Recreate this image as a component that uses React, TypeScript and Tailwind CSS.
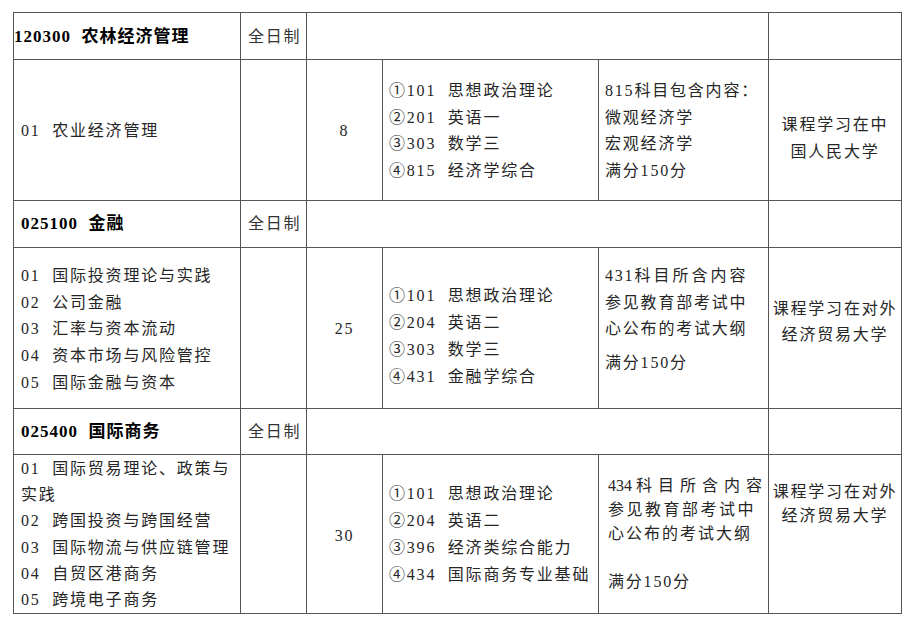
const cell = 'border border-[#555] align-top p-0'

type HeaderProps = { code: string; name: string; rowH: string; pt: string; pl: string }

function HeaderRow({ code, name, rowH, pt, pl }: HeaderProps) {
  return (
    <tr className={rowH}>
      <td className={cell}>
        <div className={`${pt} ${pl} whitespace-pre text-[17px] font-bold tracking-[1px] text-black`}>
          {code}  {name}
        </div>
      </td>
      <td className={cell}>
        <div className={`${pt} pl-[7px] text-[#333]`}>全日制</div>
      </td>
      <td colSpan={3} className={cell} />
      <td className={cell} />
    </tr>
  )
}

function Lines({ items, className }: { items: string[]; className: string }) {
  return (
    <div className={`whitespace-pre ${className}`}>
      {items.map((t) => (
        <div key={t}>{t}</div>
      ))}
    </div>
  )
}

export default function App() {
  return (
    <div className="min-h-[622px] w-[908px] bg-white pl-[13px] pt-[12px] [font-family:'Liberation_Serif','Noto_Sans_CJK_SC',serif] text-[16px] leading-[26.5px] tracking-[1.8px] text-[#262626]">
      <table className="w-[888px] table-fixed border-collapse">
        <colgroup>
          <col className="w-[227px]" />
          <col className="w-[66px]" />
          <col className="w-[76px]" />
          <col className="w-[216px]" />
          <col className="w-[170px]" />
          <col className="w-[133px]" />
        </colgroup>
        <tbody>
          {/* 120300 农林经济管理 */}
          <HeaderRow code="120300" name="农林经济管理" rowH="h-[47px]" pt="pt-[11px]" pl="pl-0" />
          <tr className="h-[141px]">
            <td className={cell}>
              <Lines className="pt-[58px] pl-[7px]" items={['01  农业经济管理']} />
            </td>
            <td className={cell} />
            <td className={cell}>
              <div className="pt-[58px] text-center">8</div>
            </td>
            <td className={cell}>
              <Lines
                className="pt-[18px] pl-[6px]"
                items={['①101  思想政治理论', '②201  英语一', '③303  数学三', '④815  经济学综合']}
              />
            </td>
            <td className={cell}>
              <Lines
                className="pt-[18px] pl-[6px]"
                items={['815科目包含内容：', '微观经济学', '宏观经济学', '满分150分']}
              />
            </td>
            <td className={cell}>
              <div className="pt-[51px] text-center leading-[27px] whitespace-nowrap">
                <div>课程学习在中</div>
                <div>国人民大学</div>
              </div>
            </td>
          </tr>

          {/* 025100 金融 */}
          <HeaderRow code="025100" name="金融" rowH="h-[47px]" pt="pt-[10px]" pl="pl-[7px]" />
          <tr className="h-[161px]">
            <td className={cell}>
              <Lines
                className="pt-[15px] pl-[7px] leading-[26.7px]"
                items={[
                  '01  国际投资理论与实践',
                  '02  公司金融',
                  '03  汇率与资本流动',
                  '04  资本市场与风险管控',
                  '05  国际金融与资本',
                ]}
              />
            </td>
            <td className={cell} />
            <td className={cell}>
              <div className="pt-[68px] text-center">25</div>
            </td>
            <td className={cell}>
              <Lines
                className="pt-[34px] pl-[6px] leading-[27px]"
                items={['①101  思想政治理论', '②204  英语二', '③303  数学三', '④431  金融学综合']}
              />
            </td>
            <td className={cell}>
              <div className="pt-[15px] pl-[6px] whitespace-nowrap">
                <div>
                  431<span className="tracking-[3px]">科目所含内容</span>
                </div>
                <div>参见教育部考试中</div>
                <div>心公布的考试大纲</div>
                <div className="mt-[7px]">满分150分</div>
              </div>
            </td>
            <td className={cell}>
              <div className="pt-[48px] text-center leading-[26px] whitespace-nowrap">
                <div>课程学习在对外</div>
                <div>经济贸易大学</div>
              </div>
            </td>
          </tr>

          {/* 025400 国际商务 */}
          <HeaderRow code="025400" name="国际商务" rowH="h-[46px]" pt="pt-[10px]" pl="pl-[7px]" />
          <tr className="h-[159px]">
            <td className={cell}>
              <Lines
                className="pt-[1px] pl-[7px] leading-[26.2px]"
                items={[
                  '01  国际贸易理论、政策与',
                  '实践',
                  '02  跨国投资与跨国经营',
                  '03  国际物流与供应链管理',
                  '04  自贸区港商务',
                  '05  跨境电子商务',
                ]}
              />
            </td>
            <td className={cell} />
            <td className={cell}>
              <div className="pt-[68px] text-center">30</div>
            </td>
            <td className={cell}>
              <Lines
                className="pt-[25px] pl-[6px] leading-[27px]"
                items={['①101  思想政治理论', '②204  英语二', '③396  经济类综合能力', '④434  国际商务专业基础']}
              />
            </td>
            <td className={cell}>
              <div className="pt-[19px] pl-[9px] leading-[24px] whitespace-nowrap">
                <div>
                  <span className="tracking-[0px]">434</span>
                  <span className="ml-[4px] tracking-[6px]">科目所含内容</span>
                </div>
                <div className="tracking-[2.5px]">参见教育部考试中</div>
                <div className="tracking-[2px]">心公布的考试大纲</div>
                <div className="mt-[24px]">满分150分</div>
              </div>
            </td>
            <td className={cell}>
              <div className="pt-[25px] text-center leading-[24px] whitespace-nowrap">
                <div>课程学习在对外</div>
                <div>经济贸易大学</div>
              </div>
            </td>
          </tr>
        </tbody>
      </table>
    </div>
  )
}
